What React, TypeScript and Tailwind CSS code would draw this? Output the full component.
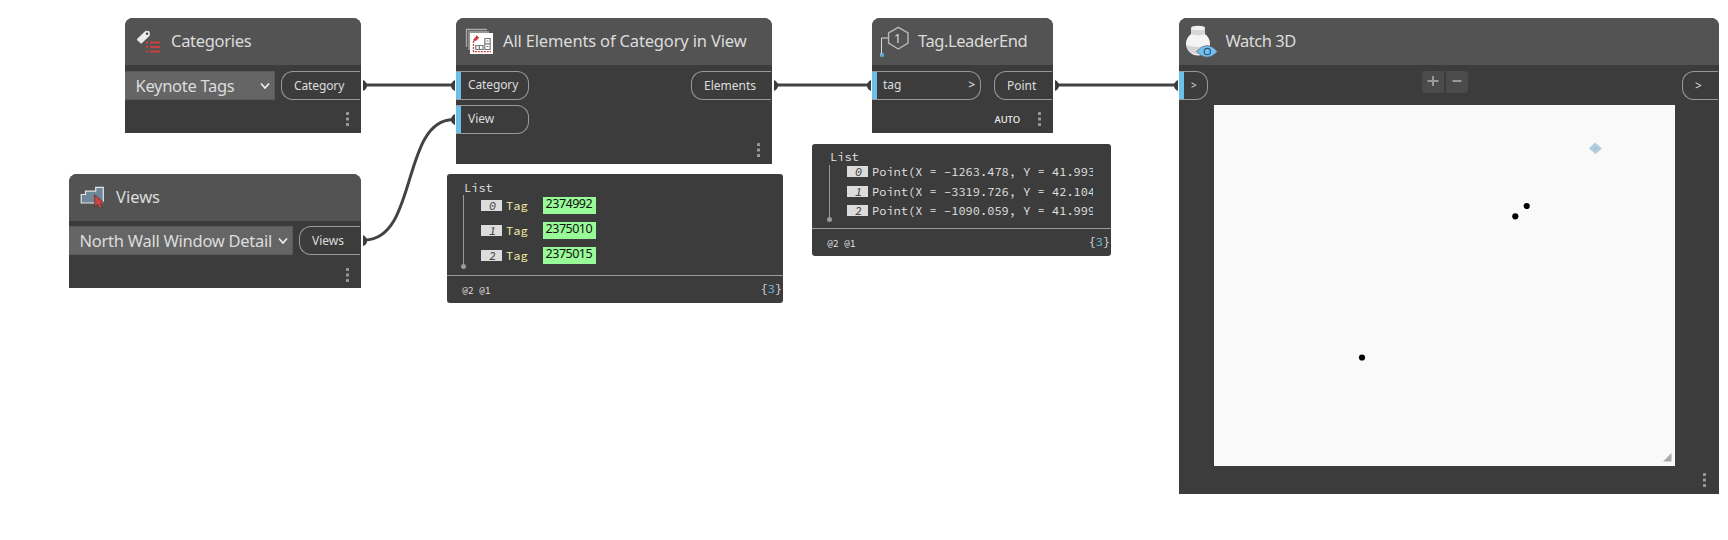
import type { ReactNode } from "react";

function Node({ place, title, icon, titleClass, children }: {
  place: string; title: string; icon: ReactNode; titleClass: string; children: ReactNode;
}) {
  return (
    <section className={`absolute flex flex-col overflow-hidden rounded-t-lg bg-[#3c3c3c] ${place}`}>
      <header className="flex h-[47px] shrink-0 items-center bg-[#535353]">
        {icon}
        <h2 className={`pb-[2px] text-[16.5px] leading-[24px] text-[#dcdcdc] ${titleClass}`}>{title}</h2>
      </header>
      {children}
    </section>
  );
}

function OutPort({ label, className }: { label: string; className: string }) {
  return (
    <div className={`flex h-[29px] shrink-0 items-center rounded-l-[12px] border border-r-0 border-[#999] pl-3 text-[12px] text-[#dcdcdc] ${className}`}>
      {label}
    </div>
  );
}

function InPort({ children, className }: { children: ReactNode; className: string }) {
  return (
    <div className={`flex h-[29px] shrink-0 items-center overflow-hidden rounded-r-[12px] border border-l-0 border-[#999] text-[12px] text-[#dcdcdc] ${className}`}>
      <span className="mr-[7px] h-[27px] w-[5px] shrink-0 bg-[#6ac0e7]" />
      {children}
    </div>
  );
}

function Dots({ className = "" }: { className?: string }) {
  return (
    <svg className={`shrink-0 ${className}`} width="3" height="15" fill="#999">
      <rect width="3" height="3" y="0" rx=".6" />
      <rect width="3" height="3" y="5.5" rx=".6" />
      <rect width="3" height="3" y="11" rx=".6" />
    </svg>
  );
}

function Dropdown({ label, className }: { label: string; className: string }) {
  return (
    <div className={`flex h-[29px] shrink-0 items-center justify-between border border-l-0 border-[#5a5a5a] bg-[#656565] pl-[10.5px] text-[16.5px] leading-[24px] text-[#dcdcdc] ${className}`}>
      <span className="whitespace-nowrap">{label}</span>
      <svg width="10" height="8" fill="none" stroke="#f2f2f2" strokeWidth="1.6">
        <path d="M1 1.5 5 6 9 1.5" />
      </svg>
    </div>
  );
}

function Index({ n }: { n: number }) {
  return (
    <span className="flex h-[11px] w-[21px] shrink-0 items-center justify-center bg-[#dcdcdc] pl-[2px] text-[12px] leading-[11px] font-medium text-[#4a4a4a] italic">
      {n}
    </span>
  );
}

function TreeLine({ h }: { h: number }) {
  return (
    <svg width="5" height={h} className="shrink-0">
      <path d={`M2.5 0V${h - 3}`} stroke="#999" />
      <circle cx="2.5" cy={h - 2.5} r="2.5" fill="#999" />
    </svg>
  );
}

function PreviewFooter({ className }: { className: string }) {
  return (
    <footer className={`flex h-[28px] items-center justify-between border-t border-[#999] pr-px pl-[15px] text-[#e2e2e2] ${className}`}>
      <span className="text-[10px] tracking-[-0.3px]">@2 @1</span>
      <span className="pb-px text-[12.5px] tracking-[-0.3px]">
        {"{"}<span className="text-[#6ac0e7]">3</span>{"}"}
      </span>
    </footer>
  );
}

function TagIcon() {
  return (
    <svg width="24" height="24" className="mr-[11px] ml-[11px]">
      <path d="M1 9.5 9.5 1.3 13 1.5 13.3 5.5 5.2 13.3Z" fill="#ececec" stroke="#ececec" strokeLinejoin="round" />
      <circle cx="11" cy="3.7" r="1.2" fill="#444" />
      <path d="M10 12.5h2M10 17h2M10 21.5h2M14 12.5h10M14 17h10M14 21.5h10" stroke="#c9413f" strokeWidth="2" />
    </svg>
  );
}

function ViewsIcon() {
  return (
    <svg width="25" height="23" className="mr-[11px] ml-[11px]">
      <path d="M1.2 17V8.5H5.5V5.2H15.7V1.3H23.3V17Z" fill="#6f8799" stroke="#e2e6e9" strokeWidth="1.2" />
      <path d="M14.7 8.7V20.8L17.6 18.4 19.7 22.5 22.3 21.3 20.3 17.4 24.3 17Z" fill="#cf4341" stroke="#4a3a3a" strokeWidth=".8" />
    </svg>
  );
}

function ElementsIcon() {
  return (
    <svg width="28" height="26" className="mr-[10px] mb-[2px] ml-[9px]" fill="none">
      <path d="M1.5 19V1.5H22M4 22V4H24" stroke="#aaa" strokeWidth="1.3" />
      <rect x="5" y="5" width="23" height="21" fill="#fff" />
      <path d="M8.5 13V23.7H26" stroke="#c9413f" strokeWidth="1.3" strokeDasharray="2 1" />
      <path d="M8.3 11.5 11 8.5V7L14.3 9.5 11.5 12.5 9 13.5Z" fill="#c9413f" />
      <path d="M19.8 10.5h5.4v5.3h-5.4zM19.8 15.8h5.4v5.7h-5.4zM10.8 17.5h7.2v4h-7.2zM14.4 17.5v4M21.5 13h2M21.5 18.5h2" stroke="#777" strokeWidth="1.2" />
    </svg>
  );
}

function LeaderIcon() {
  return (
    <svg width="29" height="32" className="mr-[9px] ml-[8px]" fill="none">
      <path d="M18.3 1.3 28 6.8V17.2L18.3 23 8.6 17.2V6.8Z" stroke="#b9b9b9" strokeWidth="1.4" />
      <path d="M8 12H1.5V27" stroke="#dcdcdc" />
      <rect x=".7" y="27.7" width="2.3" height="2.3" stroke="#6ac0e7" strokeWidth="1.3" />
      <text x="17.7" y="16.5" textAnchor="middle" fontSize="12.5" fill="#dcdcdc">1</text>
    </svg>
  );
}

function WatchIcon() {
  return (
    <svg width="33" height="33" className="mr-[7.5px] ml-[6px]">
      <path d="M6 9Q1 13 1 18.5A12 12 0 0 0 25 18.5Q25 13 20 9Z" fill="#f4f4f4" />
      <path d="M1.2 20Q13 24 24.9 20A12 11 0 0 1 1.2 20Z" fill="#d4d4d4" />
      <path d="M6 3V9Q13 11.5 20 9V3Z" fill="#d6d6d6" />
      <ellipse cx="13" cy="3" rx="7" ry="2.3" fill="#f1f1f1" />
      <path d="M11.500 26.500Q22 14.500 32.500 26.500Q22 38 11.500 26.500Z" fill="#72bff5" stroke="#535353" strokeWidth=".6" />
      <circle cx="22.3" cy="26.5" r="3.2" fill="none" stroke="#33566e" strokeWidth="1.2" />
    </svg>
  );
}

const points = [
  ["-1263.478", "41.993"],
  ["-3319.726", "42.104"],
  ["-1090.059", "41.999"],
];

export default function App() {
  return (
    <main className="relative h-[540px] w-[1728px] overflow-hidden bg-white font-['Noto_Sans',sans-serif]">
      <svg className="absolute inset-0" width="1728" height="540" fill="none">
        <g stroke="#434343" strokeWidth="3">
          <path d="M365 85H453M776 85H869M1057 85H1176" />
          <path d="M365 240C418 239 401 121 453 119.5" />
        </g>
        <g fill="#3c3c3c">
          <path d="M363 80Q367 82 367 85.500T363 91ZM363 235Q367 237 367 241T363 246ZM774 80Q778 82 778 85.500T774 91ZM1055 80Q1059 82 1059 85.500T1055 91Z" />
          <path d="M455 80Q451 82 451 85.500T455 91ZM455 114Q451 116 451 119.500T455 125ZM871 80Q867 82 867 85.500T871 91ZM1178 80Q1174 82 1174 85.500T1178 91Z" />
        </g>
      </svg>

      <Node place="left-[125px] top-[18px] h-[115px] w-[236px]" title="Categories" titleClass="tracking-[-0.3px]" icon={<TagIcon />}>
        <div className="mt-[6px] flex justify-between pr-px">
          <Dropdown label="Keynote Tags" className="w-[150px] pr-[4px] tracking-[-0.3px]" />
          <OutPort label="Category" className="w-[79px] tracking-[-0.12px]" />
        </div>
        <Dots className="mt-[12px] mr-[12px] self-end" />
      </Node>

      <Node place="left-[69px] top-[174px] h-[114px] w-[292px]" title="Views" titleClass="" icon={<ViewsIcon />}>
        <div className="mt-[5px] flex justify-between pr-px">
          <Dropdown label="North Wall Window Detail" className="w-[224px] pr-[4px] tracking-[-0.26px]" />
          <OutPort label="Views" className="w-[61px]" />
        </div>
        <Dots className="mt-[13px] mr-[12px] self-end" />
      </Node>

      <Node place="left-[456px] top-[18px] h-[146px] w-[316px]" title="All Elements of Category in View" titleClass="tracking-[-0.16px]" icon={<ElementsIcon />}>
        <div className="mt-[6px] flex justify-between pr-px">
          <div className="flex flex-col gap-[5px]">
            <InPort className="w-[73px] pb-px tracking-[-0.12px]">Category</InPort>
            <InPort className="w-[73px] pb-px">View</InPort>
          </div>
          <OutPort label="Elements" className="w-[80px]" />
        </div>
        <Dots className="mt-[9px] mr-[12px] self-end" />
      </Node>

      <section className="absolute top-[174px] left-[447px] flex h-[129px] w-[336px] flex-col justify-between rounded-[3px] bg-[#3c3c3c] font-['Source_Code_Pro','Liberation_Mono',monospace] text-[12px] text-[#e2e2e2]">
        <div className="flex flex-col pt-[6px] pl-[14px]">
          <span className="pl-[3px] leading-[15px]">List</span>
          <div className="flex">
            <TreeLine h={74} />
            <div className="flex flex-col pt-[2px] pl-[15px]">
              {["2374992", "2375010", "2375015"].map((id, i) => (
                <div key={id} className="flex h-[25px] items-start">
                  <div className="flex pt-[3px]">
                    <Index n={i} />
                    <span className="pl-[4px] leading-[12px] text-[#f3f0a8]">Tag</span>
                  </div>
                  <span className="ml-[15px] h-[17px] w-[53px] bg-[#98fb98] pl-[3px] font-['Noto_Sans',sans-serif] text-[12.5px] leading-[14px] tracking-[-0.5px] text-[#111]">
                    {id}
                  </span>
                </div>
              ))}
            </div>
          </div>
        </div>
        <PreviewFooter className="pt-px" />
      </section>

      <Node place="left-[872px] top-[18px] h-[115px] w-[181px]" title="Tag.LeaderEnd" titleClass="tracking-[-0.42px]" icon={<LeaderIcon />}>
        <div className="mt-[6px] flex justify-between pr-px">
          <InPort className="w-[109px] pr-[5px] pb-px">
            <span className="-ml-px">tag</span>
            <span className="ml-auto font-medium">&gt;</span>
          </InPort>
          <OutPort label="Point" className="w-[58px]" />
        </div>
        <div className="mt-[12px] mr-[12px] flex items-center self-end">
          <span className="mr-[18px] text-[9.5px] leading-[12px] font-medium tracking-[-0.1px] text-[#f0f0f0]">AUTO</span>
          <Dots />
        </div>
      </Node>

      <section className="absolute top-[144px] left-[812px] flex h-[112px] w-[299px] flex-col justify-between rounded-[3px] bg-[#3c3c3c] font-['Source_Code_Pro','Liberation_Mono',monospace] text-[12px] text-[#e2e2e2]">
        <div className="flex flex-col pt-[5px] pl-[15px]">
          <span className="pl-[3px] leading-[16px]">List</span>
          <div className="flex">
            <TreeLine h={57} />
            <div className="flex flex-col pt-px pl-[15px]">
              {points.map(([x, y], i) => (
                <div key={x} className="flex h-[19.5px] items-start">
                  <Index n={i} />
                  <span className="-mt-[3px] w-[225px] overflow-hidden pl-[4px] leading-[17px] whitespace-nowrap">
                    {`Point(X = ${x}, Y = ${y}`}
                  </span>
                </div>
              ))}
            </div>
          </div>
        </div>
        <PreviewFooter className="pt-px" />
      </section>

      <Node place="left-[1179px] top-[18px] h-[476px] w-[540px]" title="Watch 3D" titleClass="tracking-[-0.48px]" icon={<WatchIcon />}>
        <div className="mt-[6px] flex h-[34px] shrink-0 items-start justify-between pr-px">
          <InPort className="w-[29px] pb-px"><span className="text-[10px]">&gt;</span></InPort>
          <div className="flex gap-[2px] text-[#999]">
            <span className="flex h-[22px] w-[22px] items-center justify-center rounded-l-[4px] bg-[#4b4b4b]">
              <svg width="12" height="12" stroke="currentColor" strokeWidth="2"><path d="M.5 5H11.5M6 0V10" /></svg>
            </span>
            <span className="flex h-[22px] w-[22px] items-center justify-center rounded-r-[4px] bg-[#4b4b4b]">
              <svg width="12" height="12" stroke="currentColor" strokeWidth="2"><path d="M1.5 5H10.5" /></svg>
            </span>
          </div>
          <OutPort label=">" className="w-[36px] text-[10px]" />
        </div>
        <div className="ml-[35px] h-[361px] w-[461px] shrink-0 bg-[#f9f9f9]">
          <svg width="461" height="361">
            <path d="M381 37.500 388 43.500 381.500 49 375 43.500Z" fill="#b0ccdc" />
            <path d="M380.500 43.500h2" stroke="#8cb2c4" />
            <circle cx="312.7" cy="101" r="3.1" />
            <circle cx="301.3" cy="111.3" r="3.1" />
            <circle cx="148" cy="252.5" r="3.1" />
            <path d="M457.5 348V356.5H449Z" fill="#aaa" />
          </svg>
        </div>
        <Dots className="mt-[7px] mr-[13px] self-end" />
      </Node>
    </main>
  );
}
